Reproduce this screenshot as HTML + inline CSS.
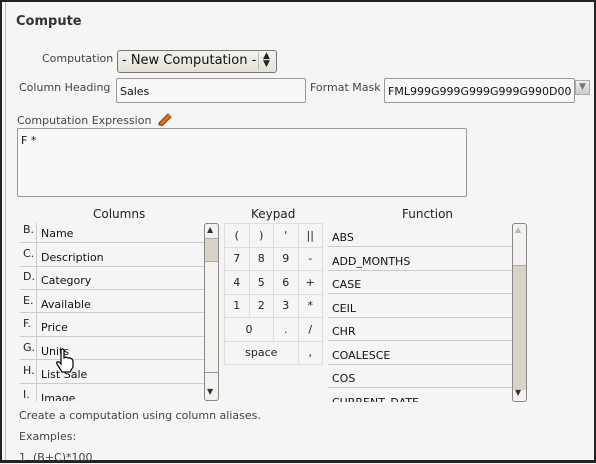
<!DOCTYPE html>
<html><head><style>
*{margin:0;padding:0;box-sizing:border-box}
body{width:596px;height:463px;overflow:hidden;background:#f5f5f5;font-family:"DejaVu Sans","Liberation Sans",sans-serif;font-size:11px;color:#333;position:relative}
.a{position:absolute;white-space:nowrap}
.frame{position:absolute;left:0;top:0;width:596px;height:463px;border:2px solid #222;border-bottom:3px solid #222}
.inner{position:absolute;left:5px;top:2px;width:589px;height:458px;border-left:1px solid #bbb}
.inp{position:absolute;background:#f8f8f8;border:1px solid #999;border-radius:2px}
.row{position:absolute;height:1px;background:#ccc}
.sb{position:absolute;width:15px;border:1px solid #888;border-radius:3px;background:#f4f2ee}
.kp{position:absolute;left:224px;top:223px;border-collapse:collapse}
.kp td{border:1px solid #ddd;width:24.5px;height:23.5px;text-align:center;font-size:11px;color:#222}
</style></head><body>
<div class="frame"></div><div class="inner"></div>
<div class="a" style="left:16px;top:14px;font-weight:bold;font-size:13px;color:#333">Compute</div>

<div class="a" style="left:42px;top:52px;color:#444">Computation</div>
<div class="inp" style="left:117px;top:50px;width:160px;height:23px;background:linear-gradient(#f4f2ee,#e4e0d8);border-color:#777;border-radius:3px"></div>
<div class="a" style="left:122px;top:53px;font-size:13px;color:#111">- New Computation -</div>
<div class="a" style="left:258px;top:52px;width:1px;height:18px;background:#bbb"></div>
<div class="a" style="left:263px;top:52px;font-size:9px;line-height:8px;color:#222">▲<br>▼</div>

<div class="a" style="left:19px;top:81px;color:#444">Column Heading</div>
<div class="inp" style="left:116px;top:78px;width:190px;height:25px"></div>
<div class="a" style="left:120px;top:85px;color:#111">Sales</div>
<div class="a" style="left:310px;top:81px;color:#444">Format Mask</div>
<div class="inp" style="left:384px;top:78px;width:191px;height:25px;overflow:hidden"><span class="a" style="left:3px;top:6px;color:#111">FML999G999G999G999G990D00</span></div>
<div class="a" style="left:575px;top:80px;width:15px;height:15px;background:linear-gradient(#eee,#ccc);border:1px solid #aaa;color:#777;font-size:9px;text-align:center;line-height:13px">▼</div>

<div class="a" style="left:17px;top:114px;color:#444">Computation Expression</div>
<svg class="a" style="left:156px;top:111px" width="17" height="15"><path d="M3 12 L12 3 L15 6 L6 15 Z" fill="#e07020" stroke="#8a3a10" stroke-width="1"/><path d="M12 3 L15 6 L16 5 L13 2Z" fill="#f5c080"/><path d="M3 12 L6 15 L2 14Z" fill="#555"/></svg>
<div class="inp" style="left:17px;top:128px;width:450px;height:69px"></div>
<div class="a" style="left:21px;top:134px;color:#111">F *</div>

<div class="a" style="left:93px;top:207px;font-size:12px;color:#222">Columns</div>
<div class="a" style="left:251px;top:207px;font-size:12px;color:#222">Keypad</div>
<div class="a" style="left:402px;top:207px;font-size:12px;color:#222">Function</div>

<div class="a" style="left:36px;top:223px;width:1px;height:178px;background:#ccc"></div>
<div class="row" style="left:20px;top:242px;width:184px"></div>
<div class="row" style="left:20px;top:266px;width:184px"></div>
<div class="row" style="left:20px;top:289px;width:184px"></div>
<div class="row" style="left:20px;top:312px;width:184px"></div>
<div class="row" style="left:20px;top:336px;width:184px"></div>
<div class="row" style="left:20px;top:359px;width:184px"></div>
<div class="row" style="left:20px;top:383px;width:184px"></div>
<div class="a" style="left:23px;top:218px;color:#222;line-height:23.5px">B.<br>C.<br>D.<br>E.<br>F.<br>G.<br>H.<br>I.</div>
<div class="a" style="left:41px;top:221px;width:160px;height:180px;overflow:hidden;color:#111;line-height:23.5px;padding-top:1px">Name<br>Description<br>Category<br>Available<br>Price<br>Units<br>List Sale<br>Image</div>
<div class="sb" style="left:204px;top:223px;height:178px">
<div class="a" style="left:2px;top:1px;font-size:8px">▲</div>
<div class="a" style="left:0;top:14px;width:13px;height:24px;background:#d9d2c6;border-top:1px solid #aaa;border-bottom:1px solid #aaa"></div>
<div class="a" style="left:0;top:148px;width:13px;height:1px;background:#999"></div>
<div class="a" style="left:2px;top:163px;font-size:8px">▼</div></div>
<svg class="a" style="left:55px;top:348px" width="22" height="26"><path d="M6 2 Q8 0 9 2 L9 10 L11 9 L13 10 L15 10 L17 11 L18 13 L18 19 L15 24 L7 24 L2 16 Q1 13 4 14 L6 16 Z" fill="#fff" stroke="#000" stroke-width="1.2"/></svg>

<table class="kp">
<tr><td>(</td><td>)</td><td>'</td><td>||</td></tr>
<tr><td>7</td><td>8</td><td>9</td><td>-</td></tr>
<tr><td>4</td><td>5</td><td>6</td><td>+</td></tr>
<tr><td>1</td><td>2</td><td>3</td><td>*</td></tr>
<tr><td colspan="2">0</td><td>.</td><td>/</td></tr>
<tr><td colspan="3">space</td><td>,</td></tr>
</table>

<div class="row" style="left:328px;top:246px;width:184px"></div>
<div class="row" style="left:328px;top:270px;width:184px"></div>
<div class="row" style="left:328px;top:293px;width:184px"></div>
<div class="row" style="left:328px;top:317px;width:184px"></div>
<div class="row" style="left:328px;top:340px;width:184px"></div>
<div class="row" style="left:328px;top:364px;width:184px"></div>
<div class="row" style="left:328px;top:387px;width:184px"></div>
<div class="a" style="left:332px;top:226px;width:178px;height:176px;overflow:hidden;color:#111;line-height:23.5px">ABS<br>ADD_MONTHS<br>CASE<br>CEIL<br>CHR<br>COALESCE<br>COS<br>CURRENT_DATE</div>
<div class="sb" style="left:512px;top:223px;height:179px">
<div class="a" style="left:2px;top:1px;font-size:8px;color:#bbb">▲</div>
<div class="a" style="left:0;top:14px;width:13px;height:152px;background:#d9d2c6;border-top:1px solid #aaa"></div>
<div class="a" style="left:0;top:14px;width:13px;height:28px;background:#f4f2ee;border-bottom:1px solid #aaa"></div>
<div class="a" style="left:2px;top:164px;font-size:8px">▼</div></div>

<div class="a" style="left:19px;top:409px;color:#444">Create a computation using column aliases.</div>
<div class="a" style="left:19px;top:430px;color:#444">Examples:</div>
<div class="a" style="left:19px;top:451px;color:#444">1. (B+C)*100</div>
</body></html>
